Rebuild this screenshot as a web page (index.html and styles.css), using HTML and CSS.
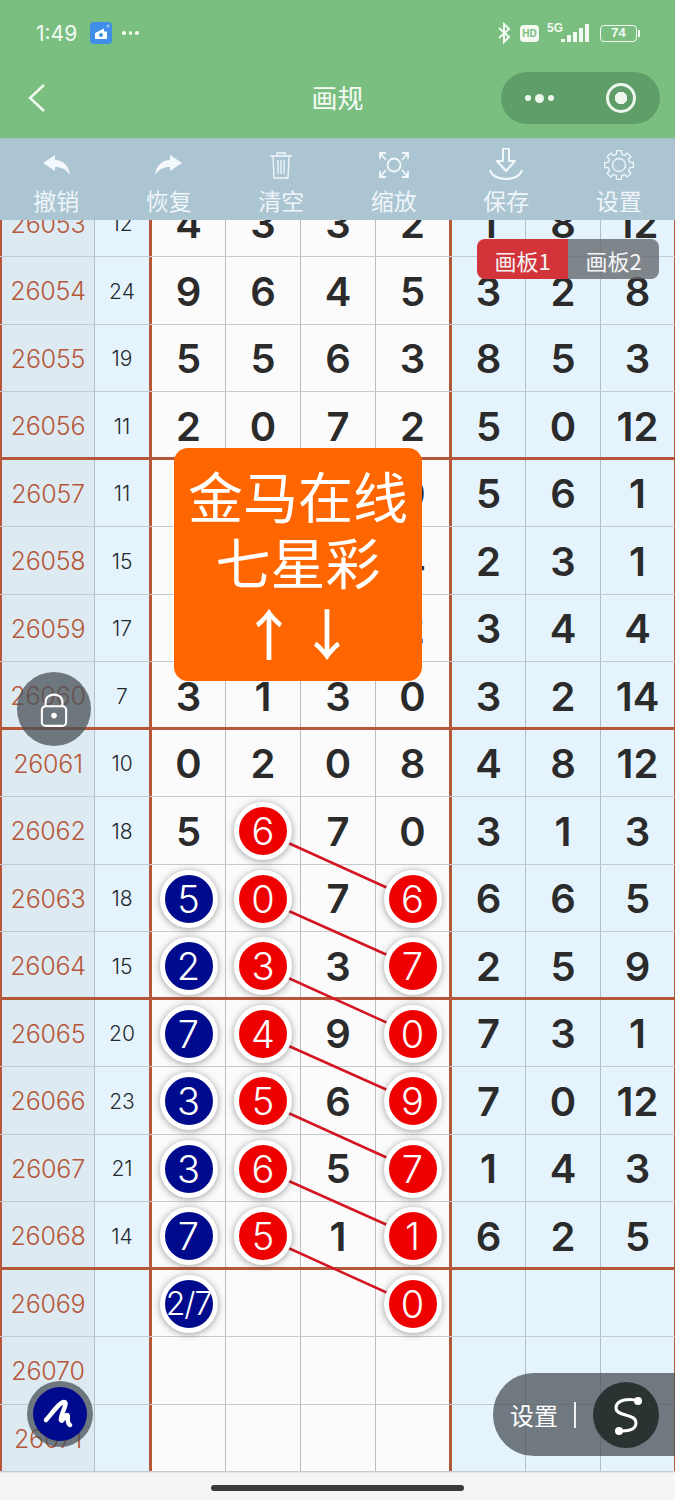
FILE: index.html
```html
<!DOCTYPE html>
<html lang="zh">
<head>
<meta charset="utf-8">
<title>画规</title>
<link rel="stylesheet" href="styles.css">
</head>
<body>
<div class="phone">
	<div class="statusbar">
		<div class="status-left">
			<span class="time">1:49</span>
			<svg class="app-icon" viewBox="0 0 22 22"><rect width="22" height="22" rx="4" fill="#3f8fe8"/><path d="M5 17V11L14 6.500V9.500H17V17Z" fill="#fff"/><circle cx="11" cy="13" r="2" fill="#3f8fe8"/><circle cx="18" cy="4" r="1.500" fill="#9cc8f5"/></svg>
			<span class="more"><i></i><i></i><i></i></span>
		</div>
		<div class="status-right">
			<svg class="bt" viewBox="0 0 16 22"><path d="M3 6L13 15L8 20V2L13 7L3 16" fill="none" stroke="#f2faf2" stroke-width="2"/></svg>
			<span class="hd">HD</span>
			<span class="net">5G</span>
			<svg class="signal" viewBox="0 0 30 20"><path d="M1 16h4v3H1zM7 12h4v7H7zM13 9h4v10h-4zM19 5h4v14h-4zM25 1h4v18h-4z" fill="#f2faf2"/></svg>
			<span class="battery">74</span>
			<span class="battery-tip"></span>
		</div>
	</div>
	<div class="navbar">
		<svg class="back" viewBox="0 0 20 32"><path d="M17 3L3 16L17 29" fill="none" stroke="#f2faf2" stroke-width="2.500"/></svg>
		<div class="nav-title">画规</div>
		<div class="capsule">
			<span class="cap-dots"><i></i><b></b><i></i></span>
			<span class="cap-ring"></span>
		</div>
	</div>
	<div class="toolbar">
		<div class="tool">
			<svg viewBox="0 0 34 34"><path d="M4 15L16 7V12C24 12 30 18 31 27C27 21 22 19 16 19V23Z" fill="#f2f8fb"/></svg>
			<span>撤销</span>
		</div>
		<div class="tool">
			<svg viewBox="0 0 34 34"><path d="M30 15L18 7V12C10 12 4 18 3 27C7 21 12 19 18 19V23Z" fill="#f2f8fb"/></svg>
			<span>恢复</span>
		</div>
		<div class="tool">
			<svg viewBox="0 0 34 34"><path d="M6 8H28M13 8V5H21V8M9 8L10 30H24L25 8M14 12V26M17 12V26M20 12V26" fill="none" stroke="#f2f8fb" stroke-width="1.300"/></svg>
			<span>清空</span>
		</div>
		<div class="tool">
			<svg viewBox="0 0 34 34"><circle cx="17" cy="17" r="6.500" fill="none" stroke="#f2f8fb" stroke-width="1.800"/><path d="M9 12L3 5M3 11V5H9M25 12L31 5M25 5H31V11M9 22L3 29M3 23V29H9M25 22L31 29M31 23V29H25" fill="none" stroke="#f2f8fb" stroke-width="1.800"/></svg>
			<span>缩放</span>
		</div>
		<div class="tool">
			<svg viewBox="0 0 34 34"><path d="M14 1.500C14 0 20 0 20 1.500V13H26L17 23L8 13H14Z" fill="none" stroke="#f2f8fb" stroke-width="2" stroke-linejoin="round"/><path d="M1 22C4 34 30 34 33 22" fill="none" stroke="#f2f8fb" stroke-width="2.200"/></svg>
			<span>保存</span>
		</div>
		<div class="tool">
			<svg viewBox="-17 -17 34 34"><polygon points="10.700,-2.700 14.300,-2.500 14.300,2.500 10.700,2.700 9.500,5.700 11.900,8.300 8.300,11.900 5.700,9.500 2.700,10.700 2.500,14.300 -2.500,14.300 -2.700,10.700 -5.700,9.500 -8.300,11.900 -11.900,8.300 -9.500,5.700 -10.700,2.700 -14.300,2.500 -14.300,-2.500 -10.700,-2.700 -9.500,-5.700 -11.900,-8.300 -8.300,-11.900 -5.700,-9.500 -2.700,-10.700 -2.500,-14.300 2.500,-14.300 2.700,-10.700 5.700,-9.500 8.300,-11.900 11.900,-8.300 9.500,-5.700" fill="none" stroke="#f2f8fb" stroke-width="1.300" stroke-linejoin="round"/><circle r="6.500" fill="none" stroke="#f2f8fb" stroke-width="1.300"/></svg>
			<span>设置</span>
		</div>
	</div>
	<div class="sheet">
		<div class="board">
			<div class="row"><div class="no">26053</div><div class="sum">12</div><div class="d">4</div><div class="d">3</div><div class="d">3</div><div class="d end">2</div><div class="d r">1</div><div class="d r">8</div><div class="d r last">12</div></div>
			<div class="row"><div class="no">26054</div><div class="sum">24</div><div class="d">9</div><div class="d">6</div><div class="d">4</div><div class="d end">5</div><div class="d r">3</div><div class="d r">2</div><div class="d r last">8</div></div>
			<div class="row"><div class="no">26055</div><div class="sum">19</div><div class="d">5</div><div class="d">5</div><div class="d">6</div><div class="d end">3</div><div class="d r">8</div><div class="d r">5</div><div class="d r last">3</div></div>
			<div class="row thick"><div class="no">26056</div><div class="sum">11</div><div class="d">2</div><div class="d">0</div><div class="d">7</div><div class="d end">2</div><div class="d r">5</div><div class="d r">0</div><div class="d r last">12</div></div>
			<div class="row"><div class="no">26057</div><div class="sum">11</div><div class="d">4</div><div class="d">8</div><div class="d">1</div><div class="d end">0</div><div class="d r">5</div><div class="d r">6</div><div class="d r last">1</div></div>
			<div class="row"><div class="no">26058</div><div class="sum">15</div><div class="d">6</div><div class="d">2</div><div class="d">3</div><div class="d end">4</div><div class="d r">2</div><div class="d r">3</div><div class="d r last">1</div></div>
			<div class="row"><div class="no">26059</div><div class="sum">17</div><div class="d">1</div><div class="d">7</div><div class="d">7</div><div class="d end">2</div><div class="d r">3</div><div class="d r">4</div><div class="d r last">4</div></div>
			<div class="row thick"><div class="no">26060</div><div class="sum">7</div><div class="d">3</div><div class="d">1</div><div class="d">3</div><div class="d end">0</div><div class="d r">3</div><div class="d r">2</div><div class="d r last">14</div></div>
			<div class="row"><div class="no">26061</div><div class="sum">10</div><div class="d">0</div><div class="d">2</div><div class="d">0</div><div class="d end">8</div><div class="d r">4</div><div class="d r">8</div><div class="d r last">12</div></div>
			<div class="row"><div class="no">26062</div><div class="sum">18</div><div class="d">5</div><div class="d"><span class="ball red">6</span></div><div class="d">7</div><div class="d end">0</div><div class="d r">3</div><div class="d r">1</div><div class="d r last">3</div></div>
			<div class="row"><div class="no">26063</div><div class="sum">18</div><div class="d"><span class="ball blue">5</span></div><div class="d"><span class="ball red">0</span></div><div class="d">7</div><div class="d end"><span class="ball red">6</span></div><div class="d r">6</div><div class="d r">6</div><div class="d r last">5</div></div>
			<div class="row thick"><div class="no">26064</div><div class="sum">15</div><div class="d"><span class="ball blue">2</span></div><div class="d"><span class="ball red">3</span></div><div class="d">3</div><div class="d end"><span class="ball red">7</span></div><div class="d r">2</div><div class="d r">5</div><div class="d r last">9</div></div>
			<div class="row"><div class="no">26065</div><div class="sum">20</div><div class="d"><span class="ball blue">7</span></div><div class="d"><span class="ball red">4</span></div><div class="d">9</div><div class="d end"><span class="ball red">0</span></div><div class="d r">7</div><div class="d r">3</div><div class="d r last">1</div></div>
			<div class="row"><div class="no">26066</div><div class="sum">23</div><div class="d"><span class="ball blue">3</span></div><div class="d"><span class="ball red">5</span></div><div class="d">6</div><div class="d end"><span class="ball red">9</span></div><div class="d r">7</div><div class="d r">0</div><div class="d r last">12</div></div>
			<div class="row"><div class="no">26067</div><div class="sum">21</div><div class="d"><span class="ball blue">3</span></div><div class="d"><span class="ball red">6</span></div><div class="d">5</div><div class="d end"><span class="ball red">7</span></div><div class="d r">1</div><div class="d r">4</div><div class="d r last">3</div></div>
			<div class="row thick"><div class="no">26068</div><div class="sum">14</div><div class="d"><span class="ball blue">7</span></div><div class="d"><span class="ball red">5</span></div><div class="d">1</div><div class="d end"><span class="ball red">1</span></div><div class="d r">6</div><div class="d r">2</div><div class="d r last">5</div></div>
			<div class="row"><div class="no">26069</div><div class="sum"></div><div class="d"><span class="ball blue small">2/7</span></div><div class="d"></div><div class="d"></div><div class="d end"><span class="ball red">0</span></div><div class="d r"></div><div class="d r"></div><div class="d r last"></div></div>
			<div class="row"><div class="no">26070</div><div class="sum"></div><div class="d"></div><div class="d"></div><div class="d"></div><div class="d end"></div><div class="d r"></div><div class="d r"></div><div class="d r last"></div></div>
			<div class="row"><div class="no">26071</div><div class="sum"></div><div class="d"></div><div class="d"></div><div class="d"></div><div class="d end"></div><div class="d r"></div><div class="d r"></div><div class="d r last"></div></div>
			<!-- connecting lines, in page coordinates -->
			<svg class="links" viewBox="0 189.500 675 1282.500">
				<path d="M263 831L413 899M263 899L413 966M263 966L413 1034M263 1034L413 1101M263 1101L413 1169M263 1169L413 1236M263 1236L413 1304"/>
			</svg>
		</div>
	</div>
	<div class="homebar"><span></span></div>

	<div class="tabs"><span class="tab on">画板1</span><span class="tab">画板2</span></div>
	<div class="promo">
		<div>金马在线</div>
		<div>七星彩</div>
		<div class="arrows"><span>↑</span><span>↓</span></div>
	</div>
	<div class="lock">
		<svg viewBox="0 0 30 38"><path d="M6 15V10C6 0 24 0 24 10V15" fill="none" stroke="#fff" stroke-width="2.200"/><rect x="2" y="15" width="26" height="21" rx="4" fill="none" stroke="#fff" stroke-width="2.200"/><circle cx="15" cy="25" r="3" fill="#fff"/></svg>
	</div>
	<div class="pen">
		<div class="pen-in">
			<svg viewBox="0 0 54 54"><path d="M13 33C20 25 27 15 31 15C36 15 27 28 28 33C29 36 32 28 34 28C36 28 33 36 37 38" fill="none" stroke="#fff" stroke-width="4.500" stroke-linecap="round" stroke-linejoin="round"/></svg>
		</div>
	</div>
	<div class="setpill">
		<span class="set-text">设置</span>
		<span class="set-sep"></span>
		<span class="set-btn">
			<svg viewBox="0 0 66 66"><path d="M45 19C38 16 23 17 23 26C23 35 43 31 43 41C43 49 32 49 26 49" fill="none" stroke="#fff" stroke-width="3"/><circle cx="45" cy="19" r="4" fill="#fff"/><circle cx="26" cy="49" r="4" fill="#fff"/></svg>
		</span>
	</div>
</div>
</body>
</html>
```

FILE: styles.css
```css
* {
	box-sizing: border-box;
}
html, body {
	margin: 0;
	padding: 0;
}
body {
	font-family: "Noto Sans CJK SC", "Noto Sans", sans-serif;
	background: #f5f5f5;
}
.phone {
	position: relative;
	width: 675px;
	height: 1500px;
	overflow: hidden;
	display: flex;
	flex-direction: column;
}

/* status bar */
.statusbar {
	height: 66px;
	background: #7abf80;
	color: #f2faf2;
	padding: 0 36px;
	display: flex;
	align-items: center;
	justify-content: space-between;
}
.status-left {
	display: flex;
	align-items: center;
}
.time {
	font-family: Inter, sans-serif;
	font-size: 21px;
	width: 54px;
}
.app-icon {
	width: 22px;
	height: 22px;
}
.more {
	display: flex;
	gap: 3px;
	margin-left: 10px;
}
.more i {
	width: 3.500px;
	height: 3.500px;
	border-radius: 50%;
	background: #f2faf2;
}
.status-right {
	display: flex;
	align-items: center;
	margin-right: -1px;
}
.bt {
	width: 16px;
	height: 22px;
}
.hd {
	width: 19px;
	height: 17px;
	margin-left: 8px;
	background: #f2faf2;
	color: #7abf80;
	border-radius: 4px;
	font: bold 10px/17px "Liberation Sans", sans-serif;
	text-align: center;
}
.net {
	font: bold 12px/12px "Liberation Sans", sans-serif;
	margin: -10px 0 0 8px;
}
.signal {
	width: 30px;
	height: 20px;
	margin-left: -3px;
}
.battery {
	width: 37px;
	height: 17px;
	margin-left: 10px;
	border: 1.500px solid #f2faf2;
	border-radius: 4px;
	font: bold 13px/14px "Liberation Sans", sans-serif;
	text-align: center;
}
.battery-tip {
	width: 2px;
	height: 7px;
	margin-left: 1px;
	background: #f2faf2;
}

/* title bar */
.navbar {
	height: 72px;
	background: #7abf80;
	padding: 0 15px 8px 15px;
	display: grid;
	grid-template-columns: 1fr auto 1fr;
	align-items: center;
}
.back {
	width: 20px;
	height: 32px;
	margin-left: 12px;
}
.nav-title {
	font-size: 26px;
	line-height: 30px;
	margin-top: -3px;
	color: #f6fbf6;
}
.capsule {
	justify-self: end;
	width: 159px;
	height: 52px;
	border-radius: 26px;
	background: #5f9e68;
	display: flex;
	align-items: center;
	justify-content: space-between;
	padding: 0 24px;
}
.cap-dots {
	display: flex;
	align-items: center;
	gap: 4px;
}
.cap-dots i {
	width: 6px;
	height: 6px;
	border-radius: 50%;
	background: #eef7ee;
}
.cap-dots b {
	width: 9px;
	height: 9px;
	border-radius: 50%;
	background: #eef7ee;
}
.cap-ring {
	width: 30px;
	height: 30px;
	border: 3.500px solid #eef7ee;
	border-radius: 50%;
	background: radial-gradient(circle, #eef7ee 0 6px, transparent 6.500px);
}

/* toolbar */
.toolbar {
	height: 82px;
	background: #abc5d3;
	display: flex;
	padding-top: 9px;
	border-top: 1px solid #a6c2c8;
}
.tool {
	flex: 1;
	display: flex;
	flex-direction: column;
	align-items: center;
	gap: 3px;
	color: #eff5f8;
	font-size: 23px;
	line-height: 30px;
}
.tool svg {
	width: 34px;
	height: 34px;
}

/* the sheet */
.sheet {
	height: 1252px;
	overflow: hidden;
}
.board {
	position: relative;
	margin-top: -30.500px;
}
.row {
	height: 67.500px;
	display: grid;
	grid-template-columns: 95px 57px 74px 75px 75px 76px 74px 75px 74px;
	border-bottom: 1px solid #c3cbd0;
}
.row.thick {
	border-bottom: 3px solid #b5583a;
}
.row > div {
	display: flex;
	align-items: center;
	justify-content: center;
	padding-top: 2px;
}
.row.thick > div {
	padding-top: 4px;
}
.no {
	background: #deeaf2;
	border-left: 2px solid #b5583a;
	border-right: 1px solid #b3c0c8;
	color: #b5583a;
	font: 300 25px Inter, sans-serif;
	letter-spacing: -.2px;
}
.sum {
	background: #e5f4fc;
	border-right: 3px solid #b5583a;
	color: #1f2a30;
	font: 300 21px Inter, sans-serif;
}
.d {
	background: #fbfbfb;
	border-right: 1px solid #bcbcbc;
	color: #2b2b2b;
	font: 600 40px Inter, sans-serif;
}
.d.end {
	border-right: 3px solid #b5583a;
}
.d.r {
	background: #e5f4fc;
	border-right-color: #b0bfc6;
}
.d.last {
	border-right-color: #b5583a;
}
.ball {
	position: relative;
	z-index: 2;
	flex: none;
	width: 58px;
	height: 58px;
	border: 5px solid #fff;
	border-radius: 50%;
	box-shadow: 0 1px 7px rgba(60, 60, 60, .5);
	color: #fff;
	display: flex;
	align-items: center;
	justify-content: center;
	font-size: 38px;
	font-weight: 300;
}
.ball.red {
	background: #ee0000;
}
.ball.blue {
	background: #000a8c;
}
.ball.small {
	font-size: 32px;
	letter-spacing: -1px;
	white-space: nowrap;
}
.links {
	position: absolute;
	left: 0;
	top: 0;
	width: 675px;
	height: 1282.500px;
	z-index: 1;
}
.links path {
	fill: none;
	stroke: #d31622;
	stroke-width: 2.500;
}
.homebar {
	flex: 1;
	background: #f5f5f5;
	border-top: 1px solid #e6e6e6;
	display: flex;
	justify-content: center;
	padding-top: 12px;
}
.homebar span {
	width: 253px;
	height: 6px;
	border-radius: 3px;
	background: #3a3a3a;
}

/* things floating over the sheet */
.tabs {
	position: absolute;
	left: 477px;
	top: 239px;
	display: flex;
	z-index: 5;
}
.tab {
	width: 91px;
	height: 40px;
	background: rgba(100, 105, 110, .8);
	color: #f5f5f5;
	font-size: 22px;
	line-height: 42px;
	text-align: center;
	border-radius: 0 8px 8px 0;
}
.tab.on {
	background: #d2343a;
	border-radius: 8px 0 0 8px;
}
.promo {
	position: absolute;
	left: 174px;
	top: 448px;
	width: 248px;
	height: 233px;
	border-radius: 14px;
	background: #ff6600;
	color: #fff;
	font-size: 55px;
	line-height: 66px;
	text-align: center;
	padding-top: 13px;
	z-index: 5;
}
.arrows {
	display: flex;
	justify-content: center;
	gap: 3px;
	font-weight: 500;
	margin-top: 5px;
}
.lock {
	position: absolute;
	left: 17px;
	top: 672px;
	width: 74px;
	height: 74px;
	border-radius: 50%;
	background: rgba(72, 80, 86, .75);
	display: flex;
	align-items: center;
	justify-content: center;
	z-index: 5;
}
.lock svg {
	width: 28px;
	height: 36px;
	margin-top: 1px;
}
.pen {
	position: absolute;
	left: 27px;
	top: 1381px;
	width: 66px;
	height: 66px;
	border-radius: 50%;
	background: rgba(72, 80, 86, .75);
	padding: 6px;
	z-index: 5;
}
.pen-in {
	width: 54px;
	height: 54px;
	border-radius: 50%;
	background: #000a8c;
}
.pen-in svg {
	display: block;
	width: 54px;
	height: 54px;
}
.setpill {
	position: absolute;
	left: 493px;
	top: 1373px;
	width: 182px;
	height: 83px;
	border-radius: 41px 0 0 41px;
	background: rgba(72, 80, 86, .75);
	display: flex;
	align-items: center;
	padding-left: 17px;
	color: #fff;
	font-size: 24px;
	z-index: 5;
}
.set-sep {
	width: 1.500px;
	height: 26px;
	background: #f0f0f0;
	margin-left: 16px;
}
.set-btn {
	width: 66px;
	height: 66px;
	margin-left: 17px;
	border-radius: 50%;
	background: #2b3232;
}
.set-btn svg {
	display: block;
	width: 66px;
	height: 66px;
}
```
